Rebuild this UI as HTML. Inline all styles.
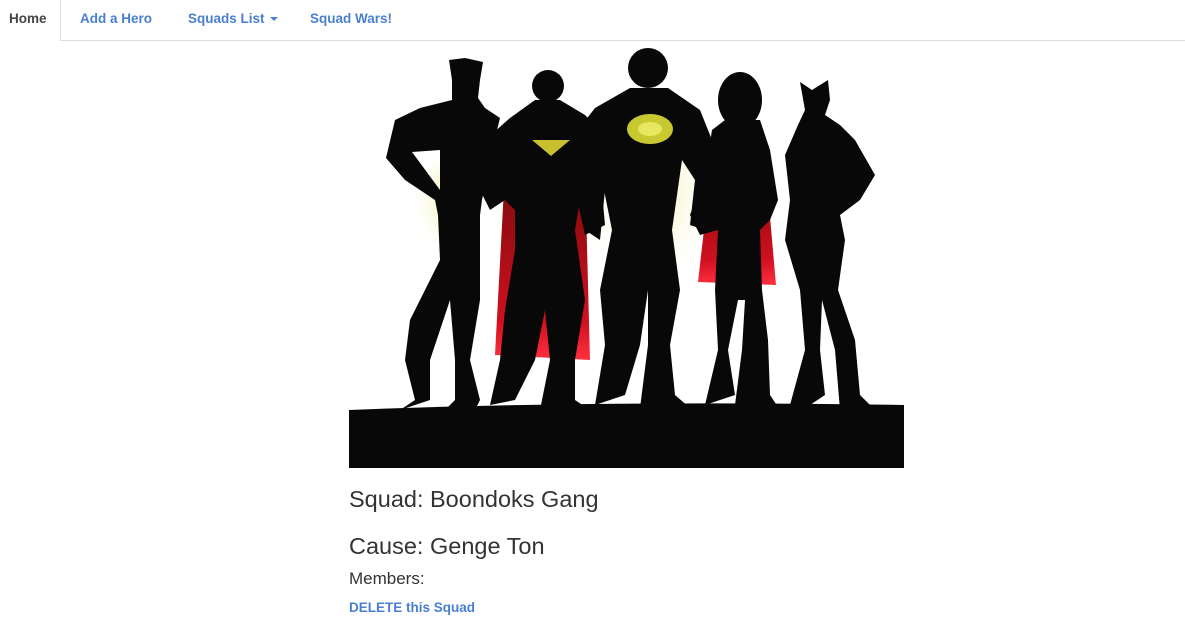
<!DOCTYPE html>
<html><head><meta charset="utf-8"><style>
html,body{margin:0;padding:0;background:#fff;width:1185px;height:640px;overflow:hidden;font-family:"Liberation Sans",sans-serif;}
.nav{position:absolute;left:0;top:0;width:1185px;height:40px;border-bottom:1px solid #ddd;}
.tab{position:absolute;top:0;height:40px;line-height:37px;font-size:13.5px;font-weight:bold;color:#4a7fd0;}
.home{left:0;width:58px;padding-left:2px;text-align:left;text-indent:7px;color:#444;border-right:1px solid #ddd;background:#fff;height:41px;}
.caret{display:inline-block;width:0;height:0;border-left:4px solid transparent;border-right:4px solid transparent;border-top:4px solid #4a7fd0;vertical-align:middle;margin-left:5px;}
.t{position:absolute;left:349px;color:#333;}
</style></head><body>
<div class="nav">
<div class="tab home">Home</div>
<div class="tab" style="left:80px">Add a Hero</div>
<div class="tab" style="left:188px">Squads List<span class="caret"></span></div>
<div class="tab" style="left:310px">Squad Wars!</div>
</div>
<svg style="position:absolute;left:349px;top:45px" width="555" height="424" viewBox="349 45 555 424">
<defs>
<radialGradient id="g" cx="50%" cy="50%" r="50%"><stop offset="0" stop-color="#e8e060" stop-opacity=".6"/><stop offset="1" stop-color="#fff" stop-opacity="0"/></radialGradient>
<linearGradient id="r" x1="0" y1="0" x2="0" y2="1"><stop offset="0" stop-color="#7a0a0a"/><stop offset=".8" stop-color="#d01020"/><stop offset="1" stop-color="#ff3040"/></linearGradient>
</defs>
<ellipse cx="650" cy="190" rx="70" ry="110" fill="url(#g)"/>
<ellipse cx="545" cy="190" rx="60" ry="90" fill="url(#g)"/>
<ellipse cx="450" cy="200" rx="40" ry="60" fill="url(#g)"/>
<path d="M505 170 L495 355 L590 360 L585 170Z" fill="url(#r)"/>
<path d="M712 160 L698 282 L776 285 L765 160Z" fill="url(#r)"/>
<g fill="#080808">
<!-- fig1 -->
<path d="M449 60 L465 58 L483 62 L480 80 L478 98 L485 108 L500 118 L492 150 L482 200 L480 215 L480 300 L470 360 L480 400 L475 410 L445 410 L455 400 L455 360 L450 300 L430 360 L430 400 L400 410 L415 400 L405 360 L410 320 L440 260 L438 215 L435 200 L405 180 L386 158 L395 120 L420 108 L452 100 L452 80Z M412 152 L440 190 L440 150 Z" fill-rule="evenodd"/>
<!-- fig2 -->
<circle cx="548" cy="86" r="16"/>
<path d="M535 100 L560 100 L585 115 L600 130 L605 190 L600 240 L585 230 L590 200 L585 170 L575 230 L585 300 L575 360 L575 400 L590 410 L540 410 L550 360 L545 310 L535 360 L515 400 L490 405 L500 360 L505 310 L515 250 L515 210 L505 200 L490 210 L475 180 L485 140 L510 118Z"/>
<!-- fig3 -->
<circle cx="648" cy="68" r="20"/>
<path d="M630 88 L668 88 L700 110 L712 140 L715 200 L705 230 L690 225 L695 180 L682 160 L672 230 L680 290 L670 345 L675 395 L690 408 L640 408 L648 345 L648 290 L640 345 L625 395 L595 405 L605 345 L600 290 L612 230 L600 170 L605 225 L585 235 L575 190 L578 130 L595 108Z"/>
<!-- fig4 -->
<ellipse cx="740" cy="100" rx="22" ry="28"/>
<path d="M725 120 L760 120 L770 150 L778 200 L770 220 L760 230 L762 290 L768 340 L770 395 L780 410 L735 405 L742 350 L745 300 L738 300 L728 350 L735 395 L705 405 L718 350 L715 290 L718 230 L700 235 L690 215 L705 175 L712 130Z"/>
<!-- fig5 -->
<path d="M800 82 L812 90 L828 80 L830 100 L825 115 L840 125 L855 140 L875 175 L860 200 L840 215 L845 240 L838 290 L855 340 L860 395 L875 410 L840 410 L835 350 L822 300 L820 350 L825 395 L810 405 L790 405 L805 350 L800 290 L785 240 L790 200 L785 155 L798 125 L805 110Z"/>
<path d="M349 410 Q600 400 904 405 L904 468 L349 468Z"/>
</g>
<path d="M532 140 L570 140 L551 156Z" fill="#c8c030"/>
<ellipse cx="650" cy="129" rx="23" ry="15" fill="#c8c830"/>
<ellipse cx="650" cy="129" rx="12" ry="7" fill="#e8e860"/>
</svg>
<div class="t" style="top:486px;font-size:23.5px;">Squad: Boondoks Gang</div>
<div class="t" style="top:533px;font-size:23.5px;">Cause: Genge Ton</div>
<div class="t" style="top:569px;font-size:17px;">Members:</div>
<div class="t" style="top:600px;font-size:13.5px;font-weight:bold;color:#4a7fd0;">DELETE this Squad</div>
</body></html>
